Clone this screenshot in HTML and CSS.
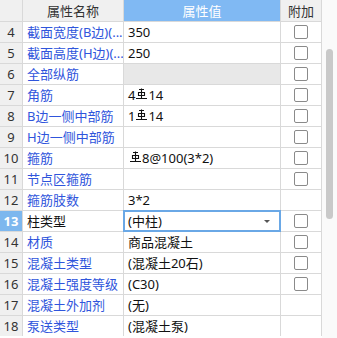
FILE: index.html
```html
<!DOCTYPE html>
<html lang="zh-CN">

<head>
    <meta charset="UTF-8">
    <title>属性表</title>
    <link rel="stylesheet" href="styles.css">
</head>

<body>
    <div class="panel">
        <div class="grid">
            <div class="cell head num"></div>
            <div class="cell head">属性名称</div>
            <div class="cell head active">属性值</div>
            <div class="cell head">附加</div>

            <div class="cell num">4</div>
            <div class="cell name">截面宽度(B边)(...</div>
            <div class="cell value">350</div>
            <div class="cell add"><span class="check"></span></div>

            <div class="cell num">5</div>
            <div class="cell name">截面高度(H边)(...</div>
            <div class="cell value">250</div>
            <div class="cell add"><span class="check"></span></div>

            <div class="cell num">6</div>
            <div class="cell name">全部纵筋</div>
            <div class="cell value locked"></div>
            <div class="cell add"><span class="check"></span></div>

            <div class="cell num">7</div>
            <div class="cell name">角筋</div>
            <div class="cell value">4<svg class="steel" viewBox="0 0 11 12"><path d="M3 1.5h5M5.5 0.5v10M2.5 4.5h6v3h-6zM0 10.5h11" /></svg>14</div>
            <div class="cell add"><span class="check"></span></div>

            <div class="cell num">8</div>
            <div class="cell name">B边一侧中部筋</div>
            <div class="cell value">1<svg class="steel" viewBox="0 0 11 12"><path d="M3 1.5h5M5.5 0.5v10M2.5 4.5h6v3h-6zM0 10.5h11" /></svg>14</div>
            <div class="cell add"><span class="check"></span></div>

            <div class="cell num">9</div>
            <div class="cell name">H边一侧中部筋</div>
            <div class="cell value"></div>
            <div class="cell add"><span class="check"></span></div>

            <div class="cell num">10</div>
            <div class="cell name">箍筋</div>
            <div class="cell value"><svg class="steel first" viewBox="0 0 11 12"><path d="M3 1.5h5M5.5 0.5v10M2.5 4.5h6v3h-6zM0 10.5h11" /></svg>8@100(3*2)</div>
            <div class="cell add"><span class="check"></span></div>

            <div class="cell num">11</div>
            <div class="cell name">节点区箍筋</div>
            <div class="cell value"></div>
            <div class="cell add"><span class="check"></span></div>

            <div class="cell num">12</div>
            <div class="cell name">箍筋肢数</div>
            <div class="cell value">3*2</div>
            <div class="cell add"></div>

            <div class="cell num selected">13</div>
            <div class="cell name plain">柱类型</div>
            <div class="cell value editing">(中柱)<span class="arrow"></span></div>
            <div class="cell add"><span class="check"></span></div>

            <div class="cell num">14</div>
            <div class="cell name">材质</div>
            <div class="cell value">商品混凝土</div>
            <div class="cell add"><span class="check"></span></div>

            <div class="cell num">15</div>
            <div class="cell name">混凝土类型</div>
            <div class="cell value">(混凝土20石)</div>
            <div class="cell add"><span class="check"></span></div>

            <div class="cell num">16</div>
            <div class="cell name">混凝土强度等级</div>
            <div class="cell value">(C30)</div>
            <div class="cell add"><span class="check"></span></div>

            <div class="cell num">17</div>
            <div class="cell name">混凝土外加剂</div>
            <div class="cell value">(无)</div>
            <div class="cell add"></div>

            <div class="cell num">18</div>
            <div class="cell name">泵送类型</div>
            <div class="cell value">(混凝土泵)</div>
            <div class="cell add"></div>
        </div>

        <div class="scrollbar">
            <div class="thumb"></div>
        </div>
    </div>
</body>

</html>
```

FILE: styles.css
```css
body {
    margin: 0;
    padding: 0;
    background-color: #ffffff;
    font-family: 'Noto Sans', 'Noto Sans CJK SC', sans-serif;
    font-size: 13px;
}

.panel {
    width: 337px;
    height: 338px;
    overflow: hidden;
    display: flex;
}

.grid {
    display: grid;
    grid-template-columns: 22px 100px 156px 40px;
    grid-auto-rows: 20px;
    grid-template-rows: 21px;
    gap: 1px;
    background-color: #d9d9d9;
    border-right: 1px solid #d9d9d9;
    align-self: flex-start;
}

.cell {
    background-color: #ffffff;
    display: flex;
    align-items: center;
    padding: 0 4px;
    white-space: nowrap;
    overflow: hidden;
    line-height: 20px;
    color: #111111;
    position: relative;
}

.head {
    background-color: #f0f0f0;
    justify-content: center;
    color: #333333;
}

.head.active {
    background-color: #80b9f3;
    color: #ffffff;
}

.num {
    background-color: #f0f0f0;
    justify-content: center;
    padding: 0;
    color: #333333;
}

.num.selected {
    background-color: #7db7ee;
    color: #ffffff;
    font-weight: bold;
}

.name {
    color: #2f55dc;
}

.name.plain {
    color: #111111;
}

.value.locked {
    background-color: #e8e8e8;
}

.value.editing {
    overflow: visible;
}

.value.editing::before {
    content: "";
    position: absolute;
    left: -1px;
    top: -1px;
    right: -1px;
    bottom: -1px;
    border: 2px solid #6aa8e6;
}

.arrow {
    position: absolute;
    right: 10px;
    top: 9px;
    border-left: 3px solid transparent;
    border-right: 3px solid transparent;
    border-top: 3px solid #555555;
}

.steel {
    width: 11px;
    height: 12px;
    margin: -2px 1px 0;
    fill: none;
    stroke: #111111;
    stroke-width: 1.1;
}

.steel.first {
    margin-left: 2px;
}

.add {
    justify-content: center;
    padding: 0;
}

.check {
    width: 12px;
    height: 12px;
    border: 1px solid #8a8a8a;
    border-radius: 2px;
    background-color: #ffffff;
}

.scrollbar {
    flex: 1;
    background-color: #fafafa;
    position: relative;
}

.thumb {
    position: absolute;
    left: 4px;
    top: 49px;
    width: 7px;
    height: 170px;
    border-radius: 4px;
    background-color: #c9c9c9;
}
```
